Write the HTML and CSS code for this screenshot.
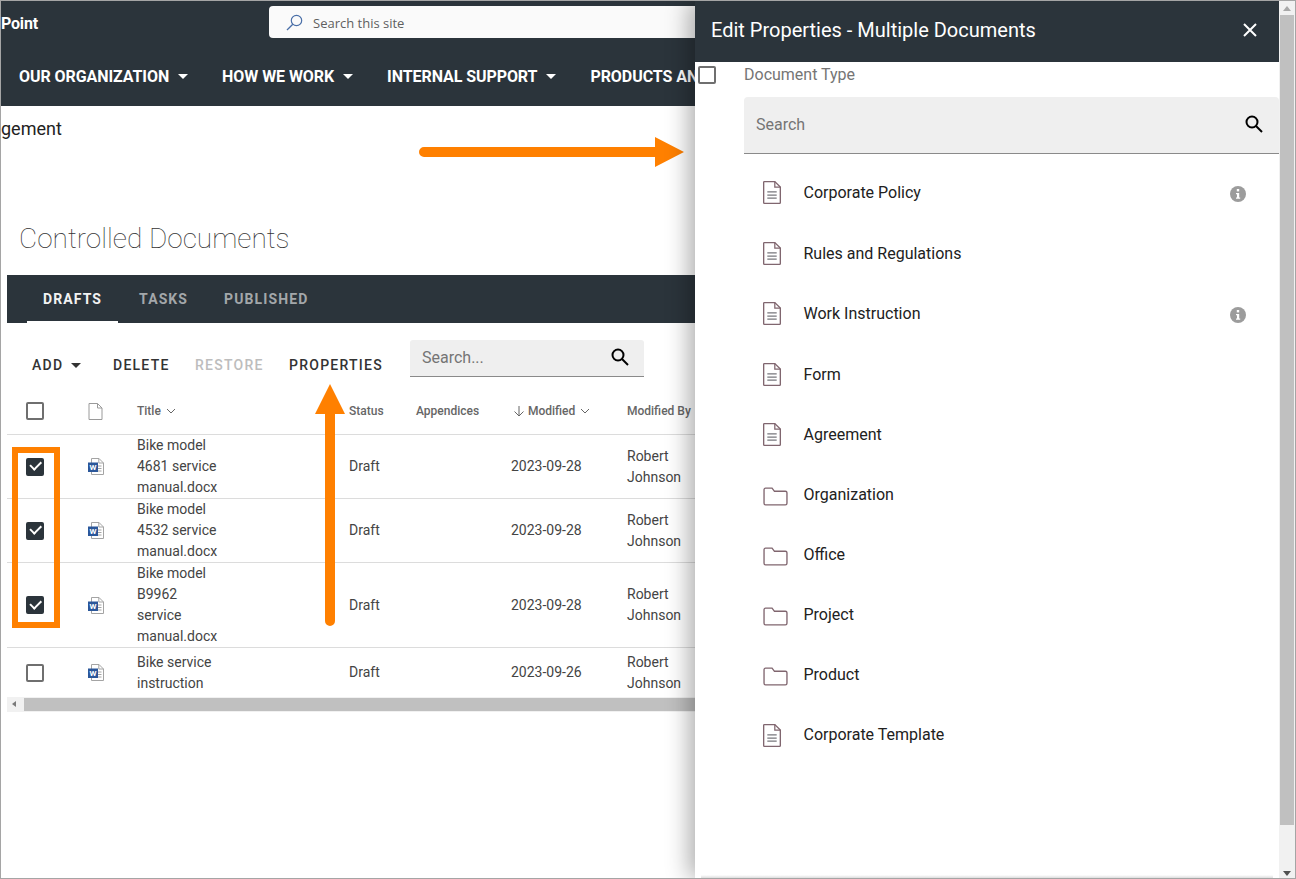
FILE: index.html
```html
<!DOCTYPE html>
<html>
  <head>
    <meta charset="UTF-8" />
    <title>Controlled Documents</title>
    <link rel="stylesheet" href="styles.css">
  </head>
  <body>
    <svg class="defs" width="0" height="0">
      <defs>
        <symbol id="i-doc" viewBox="0 0 19 24">
          <path d="M1.500 2.200c0-.4.3-.7.7-.7h10l5.300 5.300v14.900c0 .4-.3.8-.7.800H2.200c-.4 0-.7-.4-.7-.8z" fill="none" stroke="#80666f" stroke-width="1.300"/>
          <path d="M12.200 1.500v5.300h5.300" fill="none" stroke="#80666f" stroke-width="1.200"/>
          <path d="M5 11.500h9M5 14.500h9M5 17.500h9" stroke="#77777c" stroke-width="1.200"/>
        </symbol>
        <symbol id="i-folder" viewBox="0 0 24 18">
          <path d="M1 2.500c0-.8.6-1.500 1.400-1.500h6.300l2.300 3h10.500c.8 0 1.500.6 1.500 1.400v10.100c0 .8-.7 1.500-1.500 1.500H2.400c-.8 0-1.400-.7-1.400-1.500z" fill="none" stroke="#80666f" stroke-width="1.300"/>
        </symbol>
        <symbol id="i-word" viewBox="0 0 16 17">
          <path d="M3.500 .5h7.500l4.500 4.500v11.500h-12z" fill="#fff" stroke="#a4a4a4"/>
          <path d="M10.800 .5v4.500h4.700M9.500 8h4M9.500 10.500h4M9.500 13h4" fill="none" stroke="#a4a4a4"/>
          <rect x="0" y="4.500" width="10" height="9.500" fill="#2b579a"/>
          <text x="5" y="12" text-anchor="middle" class="word-w">W</text>
        </symbol>
        <symbol id="i-search" viewBox="0 0 18 18">
          <circle cx="7" cy="7" r="5.500" fill="none" stroke="#000" stroke-width="2"/>
          <path d="M11 11l6 6" stroke="#000" stroke-width="2"/>
        </symbol>
        <symbol id="i-info" viewBox="0 0 16 16">
          <circle cx="8" cy="8" r="8" fill="#9c9c9c"/>
          <rect x="6.800" y="3" width="2.400" height="2.400" fill="#fff"/>
          <path d="M6 7h3.200v4.400h1v1.300H6v-1.300h1V8.300H6z" fill="#fff"/>
        </symbol>
        <symbol id="i-sort" viewBox="0 0 10 6">
          <path d="M1 1l4 4 4-4" fill="none" stroke="#666" stroke-width="1"/>
        </symbol>
      </defs>
    </svg>

    <div class="frame">
      <header class="site-header">
        <div class="top-row">
          <div class="brand">Point</div>
          <div class="site-search">
            <svg class="site-search-icon" width="17" height="17" viewBox="0 0 17 17">
              <circle cx="10.500" cy="6.500" r="5.200" fill="none" stroke="#4a6fa8" stroke-width="1.200"/>
              <path d="M6.800 10.200L1 16" stroke="#4a6fa8" stroke-width="1.300"/>
            </svg>
            Search this site
          </div>
        </div>
        <nav class="main-nav">
          <a class="nav-item">OUR ORGANIZATION<span class="caret"></span></a>
          <a class="nav-item">HOW WE WORK<span class="caret"></span></a>
          <a class="nav-item">INTERNAL SUPPORT<span class="caret"></span></a>
          <a class="nav-item">PRODUCTS AND</a>
        </nav>
      </header>

      <div class="crumb">gement</div>
      <h1 class="page-title">Controlled Documents</h1>

      <section class="library">
        <div class="tabs">
          <a class="tab tab-active">DRAFTS</a>
          <a class="tab">TASKS</a>
          <a class="tab">PUBLISHED</a>
        </div>

        <div class="toolbar">
          <a class="tool tool-add">ADD<span class="caret caret-dark"></span></a>
          <a class="tool tool-delete">DELETE</a>
          <a class="tool tool-restore">RESTORE</a>
          <a class="tool tool-properties">PROPERTIES</a>
          <div class="doc-search">
            <span>Search...</span>
            <svg width="18" height="18"><use href="#i-search"/></svg>
          </div>
        </div>

        <table class="doc-table">
          <colgroup>
            <col class="c-check"><col class="c-icon"><col class="c-title"><col class="c-status">
            <col class="c-app"><col class="c-mod"><col class="c-by">
          </colgroup>
          <thead>
            <tr>
              <th class="cell-check"><span class="checkbox"></span></th>
              <th class="cell-icon">
                <svg class="blank-doc" width="15" height="17" viewBox="0 0 15 17">
                  <path d="M1 .5h8.500l4.500 4.500v11.500H1zM9.500 .5v4.500H14" fill="#fff" stroke="#9a9a9a"/>
                </svg>
              </th>
              <th>Title <svg class="sort" width="10" height="6"><use href="#i-sort"/></svg></th>
              <th>Status</th>
              <th>Appendices</th>
              <th>
                <svg class="sort-arrow" width="12" height="12" viewBox="0 0 12 12">
                  <path d="M6 1v10M1.500 6.500L6 11l4.500-4.500" fill="none" stroke="#666" stroke-width="1"/>
                </svg>
                Modified <svg class="sort" width="10" height="6"><use href="#i-sort"/></svg>
              </th>
              <th>Modified By</th>
            </tr>
          </thead>
          <tbody>
            <tr>
              <td class="cell-check"><span class="checkbox checked"></span></td>
              <td class="cell-icon"><svg class="word" width="16" height="17"><use href="#i-word"/></svg></td>
              <td>Bike model<br>4681 service<br>manual.docx</td>
              <td>Draft</td>
              <td></td>
              <td>2023-09-28</td>
              <td>Robert<br>Johnson</td>
            </tr>
            <tr>
              <td class="cell-check"><span class="checkbox checked"></span></td>
              <td class="cell-icon"><svg class="word" width="16" height="17"><use href="#i-word"/></svg></td>
              <td>Bike model<br>4532 service<br>manual.docx</td>
              <td>Draft</td>
              <td></td>
              <td>2023-09-28</td>
              <td>Robert<br>Johnson</td>
            </tr>
            <tr>
              <td class="cell-check"><span class="checkbox checked"></span></td>
              <td class="cell-icon"><svg class="word" width="16" height="17"><use href="#i-word"/></svg></td>
              <td>Bike model<br>B9962<br>service<br>manual.docx</td>
              <td>Draft</td>
              <td></td>
              <td>2023-09-28</td>
              <td>Robert<br>Johnson</td>
            </tr>
            <tr class="row-last">
              <td class="cell-check"><span class="checkbox"></span></td>
              <td class="cell-icon"><svg class="word" width="16" height="17"><use href="#i-word"/></svg></td>
              <td>Bike service<br>instruction</td>
              <td>Draft</td>
              <td></td>
              <td>2023-09-26</td>
              <td>Robert<br>Johnson</td>
            </tr>
          </tbody>
        </table>

        <div class="h-scroll">
          <span class="h-scroll-arrow"></span>
          <div class="h-scroll-thumb"></div>
        </div>
      </section>

      <!-- orange callouts drawn on top of the screenshot -->
      <div class="callout-box"></div>
      <svg class="callout-arrow arrow-right" width="266" height="30" viewBox="0 0 266 30">
        <path d="M5 10h231V0l29 15-29 15V20H5a5 5 0 0 1 0-10z" fill="#ff8000"/>
      </svg>
      <svg class="callout-arrow arrow-up" width="30" height="242" viewBox="0 0 30 242">
        <path d="M15 0l15 30H20v207a5 5 0 0 1-10 0V30H0z" fill="#ff8000"/>
      </svg>

      <aside class="panel">
        <div class="panel-main">
          <div class="panel-head">
            <span>Edit Properties - Multiple Documents</span>
            <svg class="panel-close" width="14" height="14" viewBox="0 0 14 14">
              <path d="M1 1l12 12M13 1L1 13" stroke="#fff" stroke-width="2"/>
            </svg>
          </div>

          <div class="field-row">
            <span class="checkbox"></span>
            <span class="field-label">Document Type</span>
          </div>

          <div class="type-search">
            <span>Search</span>
            <svg width="18" height="18"><use href="#i-search"/></svg>
          </div>

          <ul class="type-list">
            <li><svg class="t-doc"><use href="#i-doc"/></svg>Corporate Policy<svg class="t-info"><use href="#i-info"/></svg></li>
            <li><svg class="t-doc"><use href="#i-doc"/></svg>Rules and Regulations</li>
            <li><svg class="t-doc"><use href="#i-doc"/></svg>Work Instruction<svg class="t-info"><use href="#i-info"/></svg></li>
            <li><svg class="t-doc"><use href="#i-doc"/></svg>Form</li>
            <li><svg class="t-doc"><use href="#i-doc"/></svg>Agreement</li>
            <li><svg class="t-folder"><use href="#i-folder"/></svg>Organization</li>
            <li><svg class="t-folder"><use href="#i-folder"/></svg>Office</li>
            <li><svg class="t-folder"><use href="#i-folder"/></svg>Project</li>
            <li><svg class="t-folder"><use href="#i-folder"/></svg>Product</li>
            <li><svg class="t-doc"><use href="#i-doc"/></svg>Corporate Template</li>
          </ul>
          <div class="panel-foot"></div>
        </div>

        <div class="v-scroll">
          <div class="v-btn"><span class="v-up"></span></div>
          <div class="v-thumb"></div>
          <div class="v-rest"><span class="v-down"></span></div>
        </div>
      </aside>
    </div>
  </body>
</html>
```

FILE: styles.css
```css
html, body { margin: 0; padding: 0; }
body { font-family: Roboto, "Liberation Sans", sans-serif; background: #fff; }
.defs { position: absolute; }
.word-w { font: 700 8px Roboto, sans-serif; fill: #fff; }

.frame {
    position: relative;
    width: 1296px;
    height: 879px;
    box-sizing: border-box;
    border: 1px solid #a5a5a5;
    overflow: hidden;
    background: #fff;
}

/* site header */
.site-header { background: #2b343b; height: 105px; }
.top-row { display: flex; height: 60px; }
.brand { width: 268px; padding-top: 13px; color: #fff; font-size: 16px; font-weight: 700; letter-spacing: -0.2px; box-sizing: border-box; }
.site-search {
    display: flex;
    align-items: center;
    gap: 10px;
    width: 460px;
    height: 32px;
    margin-top: 5px;
    padding: 1px 0 0 17px;
    box-sizing: border-box;
    background: #fafafa;
    border-radius: 4px;
    color: #5f5f5f;
    font-family: "Open Sans", sans-serif;
    font-size: 13px;
}
.main-nav { display: flex; gap: 34px; padding-left: 18px; white-space: nowrap; }
.nav-item { display: flex; align-items: center; color: #fff; font-size: 16px; font-weight: 700; height: 30px; letter-spacing: -0.07px; }
.caret {
    display: inline-block;
    width: 0;
    height: 0;
    margin-left: 9px;
    border-left: 5px solid transparent;
    border-right: 5px solid transparent;
    border-top: 5px solid #fff;
}
.caret-dark { border-top-color: #333; }

.crumb { margin-top: 12px; height: 22px; font-size: 18px; line-height: 22px; color: #222; }
.page-title {
    margin: 0;
    padding: 82px 0 0 18px;
    height: 34px;
    font-size: 28px;
    line-height: 34px;
    font-weight: 100;
    color: #333;
}

/* documents web part */
.library { margin: 19px 0 0 6px; width: 688px; }
.tabs { display: flex; height: 48px; background: #2b343b; }
.tab {
    box-sizing: border-box;
    height: 48px;
    padding: 0 16px;
    line-height: 48px;
    color: #a3a7aa;
    font-size: 14px;
    font-weight: 700;
    letter-spacing: 1.100px;
}
.tab-active { color: #f2f2f2; border-bottom: 2px solid #fff; margin-right: 1px; }
.tab:first-child { margin-left: 20px; }
.tab + .tab { margin-left: 4px; }

.toolbar { display: flex; align-items: flex-start; height: 64px; position: relative; }
.tool { margin-top: 34px; font-size: 14px; font-weight: 500; letter-spacing: 1.250px; line-height: 16px; color: #333; }
.tool-add { margin-left: 25px; width: 81px; }
.tool-add .caret { margin-left: 8px; vertical-align: 2px; }
.tool-delete { width: 82px; }
.tool-restore { width: 94px; color: #bdbdbd; }
.tool-properties { width: 121px; }
.doc-search {
    display: flex;
    align-items: center;
    justify-content: space-between;
    width: 234px;
    height: 37px;
    margin-top: 17px;
    padding: 0 15px 2px 12px;
    box-sizing: border-box;
    background: #efefef;
    border-bottom: 1px solid #8a8a8a;
    border-radius: 3px 3px 0 0;
    font-size: 16px;
    color: #757575;
}

.doc-table { table-layout: fixed; width: 688px; border-collapse: collapse; font-size: 14px; line-height: 21px; color: #444; }
.c-check { width: 60px; }
.c-icon { width: 70px; }
.c-title { width: 212px; }
.c-status { width: 67px; }
.c-app { width: 95px; }
.c-mod { width: 116px; }
.c-by { width: 68px; }
.doc-table th {
    height: 45px;
    padding: 2px 0 0;
    text-align: left;
    font-size: 12px;
    font-weight: 500;
    color: #666;
    white-space: nowrap;
    border-bottom: 1px solid #dcdcdc;
}
.doc-table td { padding: 0; border-bottom: 1px solid #dcdcdc; vertical-align: middle; }
.row-last td { height: 49px; border-bottom: 0; }
.doc-table .cell-check { padding-left: 19px; }
.doc-table .cell-icon { padding-left: 21px; }
.doc-table th.cell-check { padding-top: 0; }
.sort { margin-left: 2px; vertical-align: 1px; }
.sort-arrow { margin-left: 2px; vertical-align: -2px; }
.blank-doc, .word { display: block; }

.checkbox {
    display: block;
    box-sizing: border-box;
    width: 18px;
    height: 18px;
    border: 2px solid #6f6f6f;
    border-radius: 2px;
    background: #fff;
    position: relative;
}
.checked { background: #2b343b; border-color: #2b343b; }
.checked::after {
    content: "";
    position: absolute;
    left: 1.500px;
    top: 1.500px;
    width: 9px;
    height: 4.500px;
    border-left: 2px solid #fff;
    border-bottom: 2px solid #fff;
    transform: rotate(-45deg);
}

.h-scroll { display: flex; height: 15px; background: #f1f1f1; }
.h-scroll-arrow {
    width: 0;
    height: 0;
    margin: 4px 6px 0 5px;
    border-top: 3.500px solid transparent;
    border-bottom: 3.500px solid transparent;
    border-right: 4px solid #7a7a7a;
}
.h-scroll-thumb { flex: 1; margin: 1px 0 1px 2px; background: #c0c0c0; }

/* annotations over the page */
.callout-box {
    position: absolute;
    left: 11px;
    top: 446px;
    width: 48px;
    height: 181px;
    box-sizing: border-box;
    border: 6px solid #ff8000;
}
.callout-arrow { position: absolute; }
.arrow-right { left: 418px; top: 136px; }
.arrow-up { left: 314px; top: 383px; }

/* edit panel */
.panel {
    position: absolute;
    top: 0;
    right: 0;
    bottom: 0;
    width: 600px;
    display: flex;
    background: #fff;
    box-shadow: -6px 0 22px rgba(0, 0, 0, 0.32);
}
.panel-main { position: relative; width: 584px; }
.panel-head {
    display: flex;
    align-items: center;
    justify-content: space-between;
    height: 61px;
    padding: 0 22px 3px 16px;
    box-sizing: border-box;
    background: #2b343b;
    color: #fff;
    font-size: 20px;
}
.field-row { display: flex; align-items: center; gap: 28px; height: 20px; padding: 3px 0 0 3px; }
.field-label { padding-bottom: 2px; font-size: 16px; color: #757575; }
.type-search {
    display: flex;
    align-items: center;
    justify-content: space-between;
    height: 57px;
    margin: 12px 0 0 49px;
    padding: 0 16px 2px 12px;
    box-sizing: border-box;
    background: #efefef;
    border-bottom: 1px solid #8a8a8a;
    border-radius: 4px 4px 0 0;
    font-size: 16px;
    color: #757575;
}
.type-list { list-style: none; margin: 8.400px 0 0; padding: 0; }
.type-list li {
    position: relative;
    display: flex;
    align-items: center;
    height: 60px;
    padding-left: 108.500px;
    font-size: 16px;
    color: #212121;
}
.type-list li:nth-child(-n+5) { height: 60.500px; }
.t-doc { position: absolute; left: 67px; top: 18px; width: 20px; height: 25px; }
.t-folder { position: absolute; left: 68px; top: 22px; width: 25px; height: 19px; }
.t-info { position: absolute; left: 535px; top: 24px; width: 16px; height: 16px; }
.panel-foot {
    position: absolute;
    left: 6px;
    right: 6px;
    bottom: 0;
    height: 3px;
    background: linear-gradient(#fff, #ddd);
}

.v-scroll { display: flex; flex-direction: column; width: 16px; background: #f1f1f1; }
.v-btn { height: 14px; display: flex; justify-content: center; align-items: center; background: #f1f1f1; }
.v-up { width: 0; height: 0; border-left: 4.500px solid transparent; border-right: 4.500px solid transparent; border-bottom: 5px solid #a8a8a8; }
.v-thumb { height: 810px; margin: 0 1px; background: #c0c0c0; }
.v-rest { flex: 1; display: flex; justify-content: center; align-items: flex-end; padding-bottom: 2px; }
.v-down { width: 0; height: 0; border-left: 4.500px solid transparent; border-right: 4.500px solid transparent; border-top: 5px solid #505050; }
```
